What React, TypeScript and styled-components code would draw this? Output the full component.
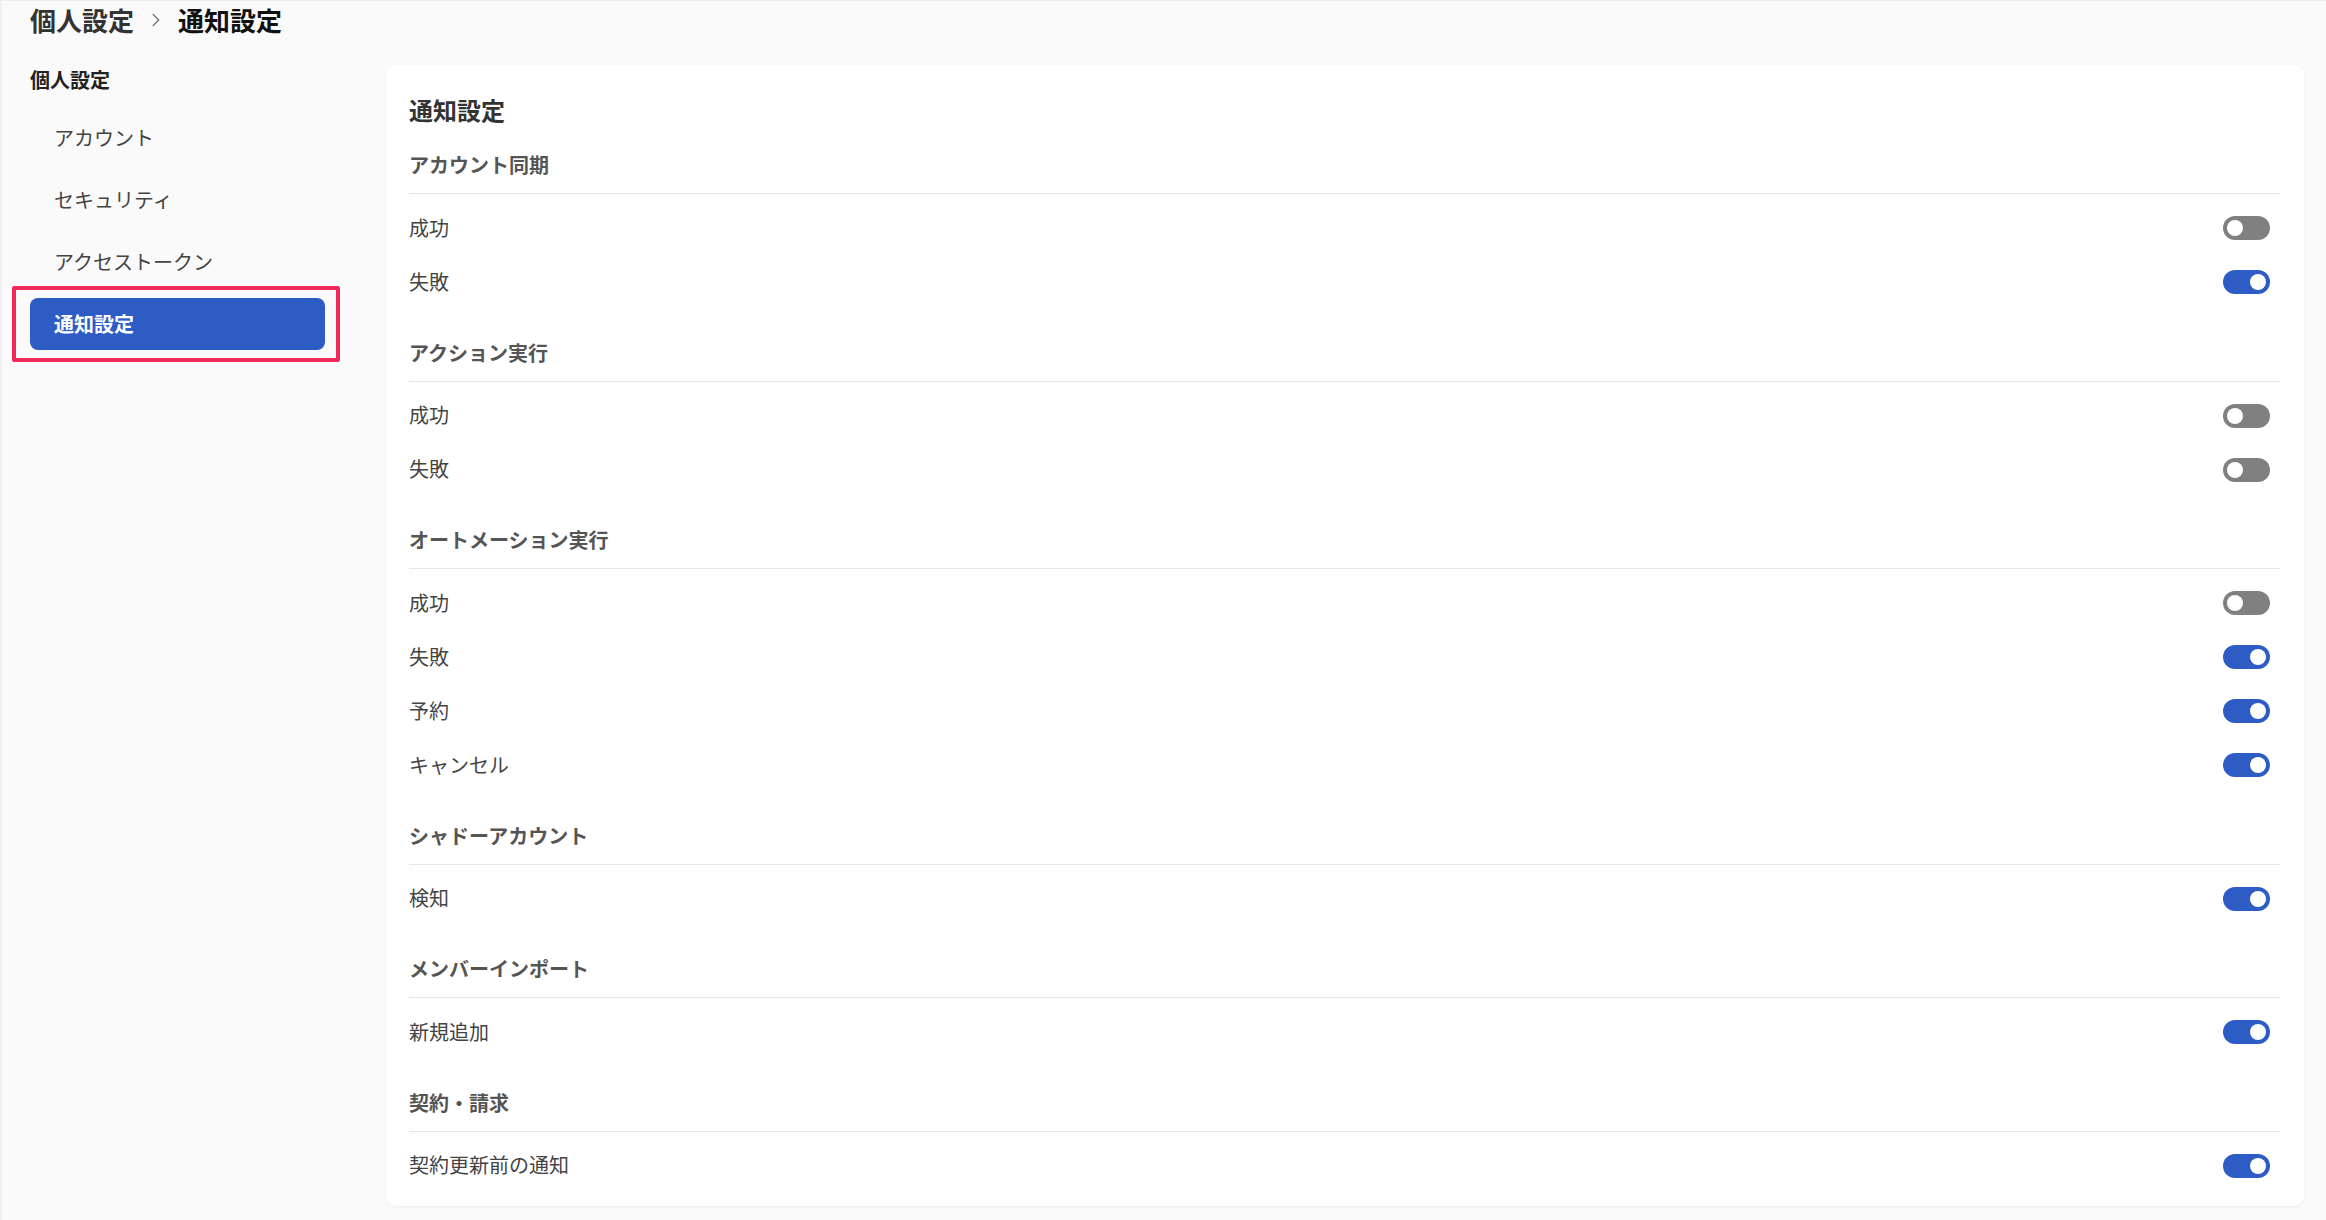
import React, {useState} from "react";
import styled, {createGlobalStyle} from "styled-components";
import {ChevronRight} from "lucide-react";

const Colors = {
    page: '#fafafa',
    primary: '#2d5cc5',
    toggleOff: '#808080',
    text: '#444444',
    heading: '#555555',
    title: '#333333',
    divider: '#e6e6e6',
    highlight: '#f2295b',
}

const GlobalStyle = createGlobalStyle`
    html, body {
        margin: 0;
        padding: 0;
        background: ${Colors.page};
        font-family: "Noto Sans CJK JP", "Noto Sans", "Liberation Sans", sans-serif;
        color: ${Colors.text};
    }
    * {
        box-sizing: border-box;
    }
`

const Page = styled.div`
    min-height: 100vh;
    border-top: 1px solid #efefef;
    border-left: 2px solid #f1f1f1;
`

const Header = styled.div`
    display: flex;
    align-items: center;
    gap: 11px;
    height: 38px;
    padding-left: 28px;
    font-size: 26px;
    font-weight: 700;
    line-height: 36px;
`

const Crumb = styled.span<{ $current?: boolean }>`
    color: ${props => props.$current ? '#111111' : Colors.title};
`

const Body = styled.div`
    display: flex;
    gap: 61px;
    padding: 26px 22px 17px 28px;
`

const Sidebar = styled.div`
    width: 295px;
    flex-shrink: 0;
`

const SidebarTitle = styled.div`
    font-size: 20px;
    font-weight: 700;
    line-height: 30px;
    color: #222222;
`

const NavList = styled.div`
    display: flex;
    flex-direction: column;
    gap: 10px;
    margin-top: 17px;
`

const NavItem = styled.div<{ $active?: boolean }>`
    position: relative;
    height: 52px;
    line-height: 52px;
    padding: 0 24px;
    border-radius: 8px;
    font-size: 20px;
    font-weight: ${props => props.$active ? 700 : 400};
    color: ${props => props.$active ? '#ffffff' : Colors.text};
    background: ${props => props.$active ? Colors.primary : 'transparent'};
    cursor: pointer;

    ${props => props.$active && `
        &::after {
            content: '';
            position: absolute;
            top: -12px;
            bottom: -12px;
            left: -18px;
            right: -15px;
            border: 4px solid ${Colors.highlight};
            border-radius: 2px;
        }
    `}
`

const Card = styled.div`
    flex: 1;
    background: #ffffff;
    border-radius: 10px;
    box-shadow: 0 1px 3px rgba(0, 0, 0, 0.06);
    padding: 30px 24px 14px 23px;
`

const CardTitle = styled.div`
    font-size: 24px;
    font-weight: 700;
    line-height: 30px;
    color: ${Colors.title};
    margin-bottom: 26px;
`

const Section = styled.div`
    & + & {
        margin-top: 30.5px;
    }
`

const SectionTitle = styled.div`
    font-size: 20px;
    font-weight: 700;
    line-height: 28px;
    color: ${Colors.heading};
    padding-bottom: 14px;
    border-bottom: 1px solid ${Colors.divider};
    margin-bottom: 6px;
`

const Row = styled.div`
    display: flex;
    align-items: center;
    justify-content: space-between;
    height: 54px;
    padding-right: 10px;
    font-size: 20px;
    color: ${Colors.text};
`

const Switch = styled.button<{ $on: boolean }>`
    position: relative;
    width: 47px;
    height: 24px;
    margin-top: 2px;
    padding: 0;
    border: none;
    border-radius: 12px;
    background: ${props => props.$on ? Colors.primary : Colors.toggleOff};
    cursor: pointer;

    &::after {
        content: '';
        position: absolute;
        top: 4px;
        left: ${props => props.$on ? '27px' : '4px'};
        width: 16px;
        height: 16px;
        border-radius: 50%;
        background: #ffffff;
    }
`

interface Setting {
    label: string
    on: boolean
}

interface SettingGroup {
    title: string
    items: Setting[]
}

const groups: SettingGroup[] = [
    {title: 'アカウント同期', items: [{label: '成功', on: false}, {label: '失敗', on: true}]},
    {title: 'アクション実行', items: [{label: '成功', on: false}, {label: '失敗', on: false}]},
    {
        title: 'オートメーション実行', items: [
            {label: '成功', on: false},
            {label: '失敗', on: true},
            {label: '予約', on: true},
            {label: 'キャンセル', on: true},
        ]
    },
    {title: 'シャドーアカウント', items: [{label: '検知', on: true}]},
    {title: 'メンバーインポート', items: [{label: '新規追加', on: true}]},
    {title: '契約・請求', items: [{label: '契約更新前の通知', on: true}]},
]

const navItems = ['アカウント', 'セキュリティ', 'アクセストークン', '通知設定']

function Toggle({initial}: { initial: boolean }) {
    const [on, setOn] = useState(initial)
    return <Switch $on={on} onClick={() => setOn(!on)} aria-pressed={on}/>
}

export default function App() {
    return <Page>
        <GlobalStyle/>
        <Header>
            <Crumb>個人設定</Crumb>
            <ChevronRight size={22} color="#7a7a7a" strokeWidth={1.6}/>
            <Crumb $current>通知設定</Crumb>
        </Header>
        <Body>
            <Sidebar>
                <SidebarTitle>個人設定</SidebarTitle>
                <NavList>
                    {
                        navItems.map(item => <NavItem key={item} $active={item === '通知設定'}>{item}</NavItem>)
                    }
                </NavList>
            </Sidebar>
            <Card>
                <CardTitle>通知設定</CardTitle>
                {
                    groups.map(group => <Section key={group.title}>
                        <SectionTitle>{group.title}</SectionTitle>
                        {
                            group.items.map(item => <Row key={item.label}>
                                <span>{item.label}</span>
                                <Toggle initial={item.on}/>
                            </Row>)
                        }
                    </Section>)
                }
            </Card>
        </Body>
    </Page>
}
